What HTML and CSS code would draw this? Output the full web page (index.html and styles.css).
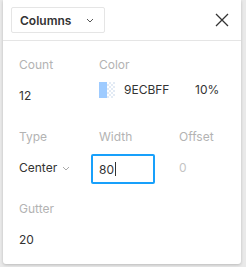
FILE: index.html
```html
<!DOCTYPE html>
<html>
<head>
<meta charset="utf-8">
<link rel="stylesheet" href="styles.css">
</head>
<body>
<div class="panel">
  <div class="header">
    <div class="select">
      <span class="select-text">Columns</span>
      <svg class="chev" width="8" height="5" viewBox="0 0 8 5"><path d="M1 1l3 3 3-3" fill="none" stroke="#555" stroke-width="1"/></svg>
    </div>
    <svg class="close" width="14" height="14" viewBox="0 0 14 14"><path d="M1 1L13 13M13 1L1 13" stroke="#333" stroke-width="1.3"/></svg>
  </div>
  <div class="body">
    <div class="row">
      <div class="col c1"><div class="label">Count</div><div class="value">12</div></div>
      <div class="col c2"><div class="label">Color</div>
        <div class="value colorval">
          <span class="swatch"><span class="swatch-solid"></span><span class="swatch-check"></span></span>
          <span class="hex">9ECBFF</span>
          <span class="pct">10%</span>
        </div>
      </div>
    </div>
    <div class="row">
      <div class="col c1"><div class="label">Type</div>
        <div class="value">Center <svg class="chev2" width="8" height="5" viewBox="0 0 8 5"><path d="M1 1l3 3 3-3" fill="none" stroke="#aaa" stroke-width="1"/></svg></div>
      </div>
      <div class="col c2w"><div class="label">Width</div>
        <div class="input">80<span class="caret"></span></div>
      </div>
      <div class="col c3"><div class="label">Offset</div><div class="value muted">0</div></div>
    </div>
    <div class="row">
      <div class="col c1"><div class="label">Gutter</div><div class="value">20</div></div>
    </div>
  </div>
</div>
</body>
</html>
```
FILE: styles.css
```css
html, body { margin: 0; padding: 0; }
body {
  width: 246px; height: 267px; overflow: hidden;
  background: #e9e9e9;
  font-family: Inter, "Noto Sans", sans-serif;
  font-size: 12px;
  color: #333;
}
.panel {
  margin-left: 3px;
  width: 238px;
  height: 264px;
  background: #fff;
  border-radius: 0 0 3px 3px;
  box-shadow: 0 1px 3px rgba(0,0,0,0.2);
}
.header {
  height: 40px;
  border-bottom: 1px solid #e5e5e5;
  display: flex;
  align-items: center;
  justify-content: space-between;
  padding: 0 12px 0 8px;
}
.select {
  width: 94px; height: 26px;
  border: 1px solid #e5e5e5;
  border-radius: 2px;
  box-sizing: border-box;
  display: flex; align-items: center; justify-content: space-between;
  padding: 0 10px 0 8px;
}
.select-text { font-weight: 600; font-size: 12px; color: #333; }
.chev { display: block; }
.close { display: block; }
.body { padding: 17px 0 0 16px; }
.row { display: flex; height: 72px; }
.col { display: flex; flex-direction: column; }
.c1 { width: 80px; }
.c2 { flex: 1; }
.c2w { width: 88px; margin-left: -8px; }
.c2w .label { padding-left: 8px; }
.label { color: #b3b3b3; height: 14px; line-height: 14px; }
.value { margin-top: 17px; height: 14px; line-height: 14px; display: flex; align-items: center; }
.muted { color: #c4c4c4; }
.chev2 { margin-left: 5px; }
.colorval { margin-top: 10px; height: 16px; }
.swatch { display: flex; width: 16px; height: 16px; }
.swatch-solid { width: 8px; height: 16px; background: #9ecbff; }
.swatch-check {
  width: 8px; height: 16px;
  background-color: #fff;
  background-image: linear-gradient(45deg, #e3ebf5 25%, transparent 25%, transparent 75%, #e3ebf5 75%),
                    linear-gradient(45deg, #e3ebf5 25%, transparent 25%, transparent 75%, #e3ebf5 75%);
  background-size: 4px 4px;
  background-position: 0 0, 2px 2px;
}
.hex { margin-left: 9px; width: 71px; }
.input {
  margin-top: 10px;
  width: 64px; height: 30px; box-sizing: border-box;
  border: 2px solid #18a0fb;
  border-radius: 2px;
  padding-left: 6px;
  display: flex; align-items: center;
}
.caret { display: inline-block; width: 1px; height: 14px; background: #333; margin-left: 1px; }
```
